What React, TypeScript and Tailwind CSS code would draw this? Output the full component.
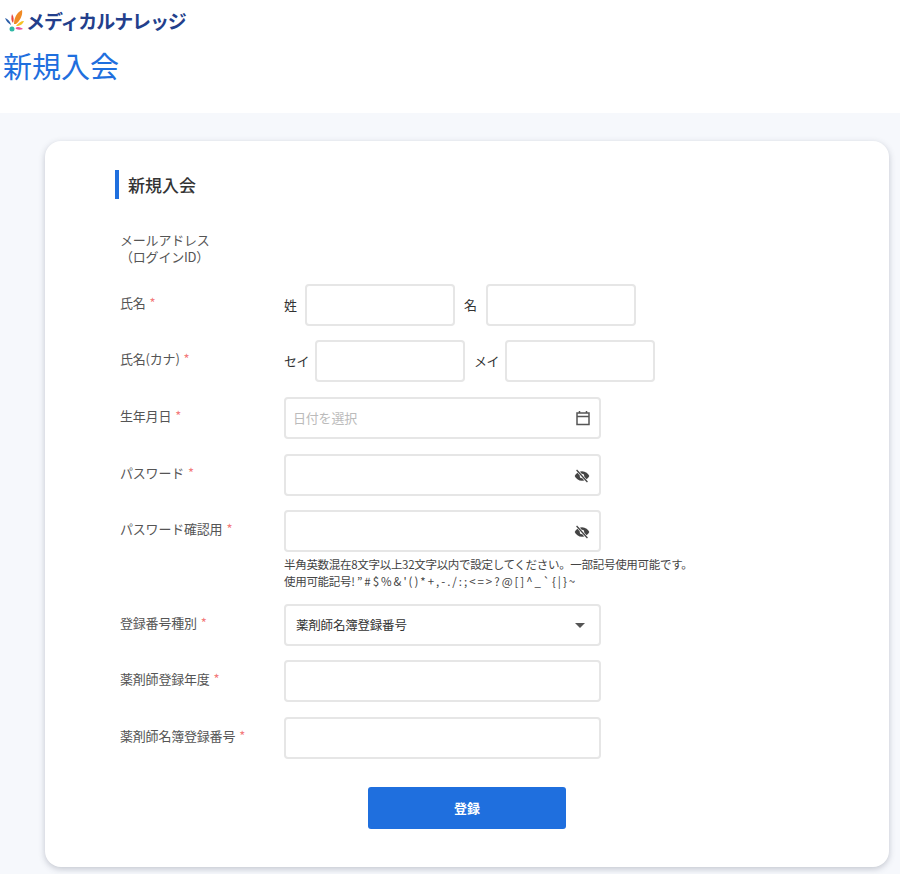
const FONT = "font-['Noto_Sans_CJK_JP','Liberation_Sans',sans-serif]";

function Input({ w, children }: { w: string; children?: React.ReactNode }) {
  return (
    <div className={`${w} h-[42px] shrink-0 flex items-center justify-between border-2 border-[#e6e6e6] rounded-[4px] bg-white`}>
      {children}
    </div>
  );
}

function Label({ text, req = true }: { text: string; req?: boolean }) {
  return (
    <div className="w-[164px] shrink-0 text-[13px] leading-[17px] text-[#555] tracking-[-0.2px]">
      {text}
      {req && <span className="text-[#f37b7b] ml-[4px]">*</span>}
    </div>
  );
}

function Row({ text, mt, children }: { text: string; mt: string; children: React.ReactNode }) {
  return (
    <div className={`flex items-start ${mt}`}>
      <div className="pt-[10px]"><Label text={text} /></div>
      {children}
    </div>
  );
}

function EyeOff() {
  return (
    <svg width="16" height="14" viewBox="0 0 24 22" className="mr-[9px] mt-[1px]">
      <path d="M12 3.5C6.5 3.5 2.2 7 .5 11c1.7 4 6 7.5 11.500 7.500S21.800 15 23.500 11C21.800 7 17.500 3.500 12 3.500Z" fill="#444" />
      <circle cx="12" cy="11" r="3.600" fill="#fff" />
      <path d="M3.500 1.500 20.500 20.500" stroke="#fff" strokeWidth="4" />
      <path d="M3.500 1.500 20.500 20.500" stroke="#444" strokeWidth="2" />
    </svg>
  );
}

function Logo() {
  return (
    <svg width="22" height="24" viewBox="0 0 22 24" className="shrink-0">
      <path d="M11 15C11 9 14 3 19 1c1 5-2 11-6 14Z" fill="#f08a24" />
      <path d="M13 17c2-3 5-5 8-5-1 3-4 5-8 5Z" fill="#f6c324" />
      <path d="M13 20c-1-1 0-2 2-2 2 0 4 1 5 2-2 1-5 1-7 0Z" fill="#e9549b" />
      <path d="M10 14C8 12 8 8 9 5c2 3 2 6 1 9Z" fill="#e8483f" />
      <path d="M8 16C5 14 3 12 2 9c3 1 5 3 6 7Z" fill="#2c5ea8" />
      <circle cx="9" cy="20" r="2.500" fill="#2fb8a6" />
    </svg>
  );
}

export default function App() {
  return (
    <div className={`${FONT} w-[900px] h-[874px] overflow-hidden bg-white`}>
      <header className="h-[113px] pl-[3px]">
        <div className="flex items-center h-[32px] pt-[10px] gap-[1px]">
          <Logo />
          <span className="text-[19px] font-bold leading-[24px] text-[#233f8c] tracking-[-1.100px]">メディカルナレッジ</span>
        </div>
        <h1 className="mt-[12px] text-[29px] leading-[42px] text-[#1f6fde] font-normal">新規入会</h1>
      </header>
      <main className="h-[761px] bg-[#f6f8fc] pt-[28px] pl-[45px]">
        <div className="w-[844px] h-[726px] bg-white rounded-[16px] shadow-[0_2px_6px_rgba(60,70,90,0.28)] pt-[29px] pl-[70px]">
          <h2 className="border-l-[4px] border-[#1f6fde] pl-[9px] h-[29px] text-[17px] leading-[29px] font-medium text-[#333]">新規入会</h2>
          <div className="pl-[5px]">
            <div className="mt-[32px] h-[32px] text-[13px] leading-[17px] text-[#555] tracking-[-0.2px]">
              メールアドレス<br />（ログインID）
            </div>
            <Row text="氏名" mt="mt-[21px]">
              <div className="flex items-center text-[13px] text-[#333]">
                <span className="w-[21px]">姓</span>
                <Input w="w-[150px]" />
                <span className="w-[31px] pl-[9px]">名</span>
                <Input w="w-[150px]" />
              </div>
            </Row>
            <Row text="氏名(カナ)" mt="mt-[14px]">
              <div className="flex items-center text-[13px] text-[#333]">
                <span className="w-[31px] tracking-[-0.5px]">セイ</span>
                <Input w="w-[150px]" />
                <span className="w-[40px] pl-[9px] tracking-[-0.5px]">メイ</span>
                <Input w="w-[150px]" />
              </div>
            </Row>
            <Row text="生年月日" mt="mt-[15px]">
              <Input w="w-[317px]">
                <span className="pl-[7px] text-[13px] text-[#bbb] tracking-[-0.2px]">日付を選択</span>
                <svg width="16" height="16" viewBox="0 0 16 16" className="mr-[8px]">
                  <path d="M2 3h12v11.500H2ZM2 6.500h12M4.500 1v2.500M11.500 1v2.500" fill="none" stroke="#555" strokeWidth="1.500" />
                </svg>
              </Input>
            </Row>
            <Row text="パスワード" mt="mt-[15px]">
              <Input w="w-[317px]"><span /><EyeOff /></Input>
            </Row>
            <Row text="パスワード確認用" mt="mt-[14px]">
              <div>
                <Input w="w-[317px]"><span /><EyeOff /></Input>
                <p className="mt-[4px] h-[34px] w-[440px] text-[11.500px] leading-[17px] text-[#444] tracking-[-0.3px] whitespace-nowrap">
                  半角英数混在8文字以上32文字以内で設定してください。一部記号使用可能です。<br />
                  使用可能記号! ” # $ % &amp; ' ( ) * + , - . / : ; &lt; = &gt; ? @ [ ] ^ _ ` { "{" } | { "}" } ~
                </p>
              </div>
            </Row>
            <Row text="登録番号種別" mt="mt-[14px]">
              <Input w="w-[317px]">
                <span className="pl-[10px] text-[12.500px] text-[#333] tracking-[-0.2px]">薬剤師名簿登録番号</span>
                <svg width="10" height="5" viewBox="0 0 10 5" className="mr-[14px]"><path d="M0 0h10L5 5Z" fill="#555" /></svg>
              </Input>
            </Row>
            <Row text="薬剤師登録年度" mt="mt-[14px]"><Input w="w-[317px]" /></Row>
            <Row text="薬剤師名簿登録番号" mt="mt-[15px]"><Input w="w-[317px]" /></Row>
            <button className="block mt-[28px] ml-[248px] w-[198px] h-[42px] rounded-[3px] bg-[#1f6fde] text-white text-[13px] font-bold">登録</button>
          </div>
        </div>
      </main>
    </div>
  );
}
